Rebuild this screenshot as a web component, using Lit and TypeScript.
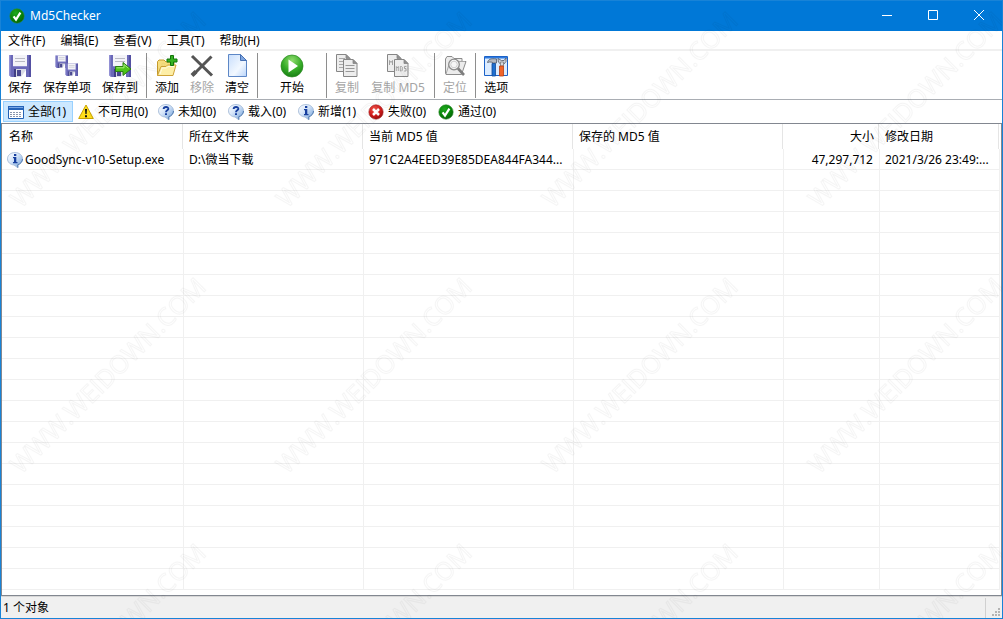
import { LitElement, html, svg, css, nothing } from "lit";
import { customElement, property, state } from "lit/decorators.js";
import { classMap } from "lit/directives/class-map.js";

const check = (id: string) => svg`
  <defs><radialGradient id=${id} cx=".4" cy=".3" r=".75">
    <stop offset="0" stop-color="#1fa81f"/><stop offset=".6" stop-color="#078407"/><stop offset="1" stop-color="#055e05"/>
  </radialGradient></defs>
  <circle cx="8" cy="8" r="7.2" fill="url(#${id})" stroke="#2f8a2f" stroke-width=".6"/>
  <path d="M4.600 8.300 7 11.600 11.400 4.600" fill="none" stroke="#fff" stroke-width="2.200"/>`;

const bubble = (mark: unknown) => svg`
  <defs><linearGradient id="bub" x1="0" y1="0" x2="1" y2="1">
    <stop offset="0" stop-color="#fff"/><stop offset=".4" stop-color="#d8e7fa"/><stop offset="1" stop-color="#6f9fd8"/>
  </linearGradient></defs>
  <path d="M8 .5C12.200.5 15.500 3.200 15.500 6.800c0 2.900-2 5.100-4.700 5.900V15.800L7 13C3.300 12.700.5 10.200.5 6.800.5 3.200 3.800.5 8 .5z" fill="url(#bub)" stroke="#9db5d3" stroke-width=".8"/>
  <path d="M10.800 15.600V12.700C13.500 11.900 15.400 9.800 15.500 7" fill="none" stroke="#4f7ab2" stroke-width="1"/>
  ${mark}`;

const disk = svg`
  <path d="M1 1h21.500v22H3L1 21z" fill="#6a68b8"/>
  <path d="M1 1h1.500v20.500L4 23H3L1 21z" fill="#9290d4"/>
  <path d="M21 1h2v22h-2z" fill="#5350a2"/>
  <path d="M5 1h14v11H5z" fill="#f3f3f8"/>
  <path d="M7 4.500h10M7 7.500h10" stroke="#b9bac4" stroke-width="1"/>
  <path d="M5 12h14v1H5z" fill="#8a88cc"/>
  <path d="M6 15h12v8H6z" fill="#3f3d83"/>
  <path d="M8 15h10v8H8z" fill="#d9dbe6"/>
  <path d="M9 16h4v6H9z" fill="#4a4890"/>
  <path d="M13 23 18 16v7z" fill="#fff"/>`;

const sheet = (x: number, y: number) => svg`
  <g transform="translate(${x} ${y})">
    <path d="M.5.5h9.500l4 4v13H.5z" fill="#ededed" stroke="#868686"/>
    <path d="M10 .5v4h4z" fill="#8f8f8f" stroke="#868686" stroke-width=".8"/>
  </g>`;

const ICONS: Record<string, { box: string; art: unknown }> = {
  save: { box: "0 0 24 24", art: disk },
  saveItem: {
    box: "0 0 24 24",
    art: svg`<g transform="translate(0 1) scale(.56)">${disk}</g><g transform="translate(10 9) scale(.56)">${disk}</g>`,
  },
  saveTo: {
    box: "0 0 24 24",
    art: svg`${disk}<path d="M7.500 12.500h7.500V8.500l8 6.500-8 6.500v-4H7.500z" fill="#4cc417" stroke="#2a7d12" stroke-width="1"/><path d="M8.500 13.800h7.500V10.600l4.500 3.600" fill="none" stroke="#a5ec7a"/>`,
  },
  add: {
    box: "0 0 24 24",
    art: svg`<path d="M2.500 21.500v-14l1.500-1.500h5l2 2h8v4" fill="#f6dd7d" stroke="#c59a2c"/>
      <path d="M2.500 21.500 6 12.500h5l1.500-1.500h8.500L18 21.500z" fill="#fdeea6" stroke="#cfa337"/>
      <path d="M5 20l2.200-6h4.300l1.500-1.500h6" fill="none" stroke="#fffbe0"/>
      <path d="M15.500 1.500h3v3.500h3.500v3h-3.500v3.500h-3V8H12V5h3.500z" fill="#35b322" stroke="#11770a"/>`,
  },
  remove: {
    box: "0 0 24 24",
    art: svg`<path d="M2 2 22 21.500M21.500 2.500 3.500 20.500" stroke="#555" stroke-width="3"/><path d="M2 21.500 6 17.500" stroke="#555" stroke-width="4"/>`,
  },
  clear: {
    box: "0 0 24 24",
    art: svg`<defs><linearGradient id="pg" x1="0" y1="0" x2="1" y2="1"><stop offset="0" stop-color="#c8defc"/><stop offset=".6" stop-color="#f2f8ff"/><stop offset="1" stop-color="#b9d4fa"/></linearGradient></defs>
      <path d="M3.500.5h12l6 6v16h-18z" fill="url(#pg)" stroke="#5d87c6"/>
      <path d="M15.500.5v6h6z" fill="#7fa6e0" stroke="#4771b4"/>`,
  },
  start: {
    box: "0 0 24 24",
    art: svg`<defs><radialGradient id="go" cx=".5" cy=".25" r=".8"><stop offset="0" stop-color="#8fdc6e"/><stop offset=".55" stop-color="#35ab27"/><stop offset="1" stop-color="#147a12"/></radialGradient></defs>
      <circle cx="12" cy="12" r="11" fill="url(#go)" stroke="#2a8a20" stroke-width=".7"/>
      <path d="M8.500 5.500 18 12l-9.500 6.500z" fill="#fff"/>`,
  },
  copy: {
    box: "0 0 24 24",
    art: svg`${sheet(1, 0)}<path d="M4 4.500h6M4 7.500h5M4 10.500h4M4 13.500h4" stroke="#a8a8a8"/>
      ${sheet(8, 5)}<path d="M10.500 11.500h9M10.500 14.500h9M10.500 17.500h9" stroke="#999"/>`,
  },
  copyMd5: {
    box: "0 0 24 24",
    art: svg`${sheet(1, 0)}<path d="M3.500 11V6.500l1.500 2 1.500-2V11" fill="none" stroke="#a0a0a0"/>
      ${sheet(8, 5)}<path d="M10.300 17v-4.500l1 1.500 1-1.500V17M14.300 12.500v4.500h1.200l.8-.8v-3l-.8-.7zM20.500 12.500h-2v2H20v2.500h-2" fill="none" stroke="#959595" stroke-width=".8"/>`,
  },
  locate: {
    box: "0 0 24 24",
    art: svg`<path d="M2.500 19V5l1.500-2.500h5L11 4.500h8v3h4L18.500 20.500H3z" fill="#ececec" stroke="#8c8c8c"/>
      <path d="M3 20 7 7.500h15" fill="none" stroke="#a8a8a8"/>
      <circle cx="11" cy="10.500" r="5.300" fill="#f6f6f6" stroke="#8c8c8c" stroke-width="1.300"/>
      <circle cx="11" cy="10.500" r="3.300" fill="none" stroke="#ccc"/>
      <path d="M15 14.500 21 21" stroke="#7e7e7e" stroke-width="2.600"/>`,
  },
  options: {
    box: "0 0 24 24",
    art: svg`<path d="M.5 2.500h23v19H.5z" fill="#dcecff" stroke="#1c62c8"/>
      <path d="M1 3h22v1.500H1z" fill="#2f7be0"/>
      <path d="M3.500 8.500C4 5.500 7 4 12.500 5v4H9.500L8 8.200 5.500 8z" fill="#b4b9c2" stroke="#565b66" stroke-width=".8"/>
      <path d="M8 9.500h3.500V22H8z" fill="#1f6fd0" stroke="#124a96" stroke-width=".8"/>
      <path d="M14 4.500 14.300 8 16.500 10h3.500L22 7.500V4l-2 2.500h-2.500z" fill="#ccd0d8" stroke="#565b66" stroke-width=".8"/>
      <path d="M16.500 8h3v4h-3z" fill="#d5d8de" stroke="#666" stroke-width=".6"/>
      <path d="M15.500 12h4v10h-4z" fill="#f0642a" stroke="#b53d12" stroke-width=".8"/>`,
  },
  all: {
    box: "0 0 16 16",
    art: svg`<path d="M.5 2.500h15v12H.5z" fill="#fff" stroke="#2462b4"/><path d="M0 2h16v4H0z" fill="#2563b8"/><path d="M1 3h14v1H1z" fill="#78a7e6"/>
      <path d="M2 8.500h12M2 10.500h12M2 12.500h12" stroke="#8a96ac" stroke-dasharray="2 1"/>`,
  },
  warn: {
    box: "0 0 16 16",
    art: svg`<path d="M8 1 15.300 14.500H.7z" fill="#ffdf1b" stroke="#c9a300" stroke-linejoin="round"/><path d="M7 5h2l-.4 5H7.400z" fill="#111"/><path d="M7 11.200h2v2H7z" fill="#111"/>`,
  },
  question: {
    box: "0 0 16 16",
    art: bubble(svg`<path d="M5.600 5C5.800 2.400 10.400 2.200 10.300 4.900 10.200 6.300 8 6.200 8 8.200" fill="none" stroke="#173f9e" stroke-width="1.900"/><path d="M7 9.200h2v1.900H7z" fill="#173f9e"/>`),
  },
  info: {
    box: "0 0 16 16",
    art: bubble(svg`<path d="M7 2h2.300v2H7zM6 5h3.300v5H10.500v1.200H6v-1.200H7V6.200H6z" fill="#173f9e"/>`),
  },
  fail: {
    box: "0 0 16 16",
    art: svg`<defs><radialGradient id="rd" cx=".4" cy=".3" r=".75"><stop offset="0" stop-color="#f0564a"/><stop offset=".6" stop-color="#cf1a1a"/><stop offset="1" stop-color="#8e0c0c"/></radialGradient></defs>
      <circle cx="8" cy="8" r="7.200" fill="url(#rd)" stroke="#a52b2b" stroke-width=".6"/><path d="M5 5l6 6M11 5l-6 6" stroke="#fff" stroke-width="2.500"/>`,
  },
  pass: { box: "0 0 16 16", art: check("gr") },
};

@customElement("app-icon")
export class AppIcon extends LitElement {
  @property() name = "save";
  static styles = css`
    :host { display: block; width: 16px; height: 16px; flex: none; }
    .art { display: block; width: 100%; height: 100%; }
  `;
  render() {
    const icon = ICONS[this.name];
    return html`<svg class="art" viewBox=${icon.box} aria-hidden="true">${icon.art}</svg>`;
  }
}

interface Tool { label: string; icon: string; off?: boolean; size?: "wide" | "broad" }

const TOOLS: (Tool | null)[] = [
  { label: "保存", icon: "save" },
  { label: "保存单项", icon: "saveItem" },
  { label: "保存到", icon: "saveTo" },
  null,
  { label: "添加", icon: "add" },
  { label: "移除", icon: "remove", off: true },
  { label: "清空", icon: "clear" },
  null,
  { label: "开始", icon: "start", size: "wide" },
  null,
  { label: "复制", icon: "copy", off: true },
  { label: "复制 MD5", icon: "copyMd5", off: true, size: "broad" },
  null,
  { label: "定位", icon: "locate", off: true },
  null,
  { label: "选项", icon: "options" },
];

const FILTERS = [
  { label: "全部", count: 1, icon: "all" },
  { label: "不可用", count: 0, icon: "warn" },
  { label: "未知", count: 0, icon: "question" },
  { label: "载入", count: 0, icon: "question" },
  { label: "新增", count: 1, icon: "info" },
  { label: "失败", count: 0, icon: "fail" },
  { label: "通过", count: 0, icon: "pass" },
];

const MENUS = ["文件(F)", "编辑(E)", "查看(V)", "工具(T)", "帮助(H)"];
const COLUMNS = ["名称", "所在文件夹", "当前 MD5 值", "保存的 MD5 值", "大小", "修改日期"];
const EMPTY_ROWS = Array.from({ length: 20 });

@customElement("app-root")
export class AppRoot extends LitElement {
  @state() private active = 0;

  static styles = css`
    :host {
      display: block;
      font: 12px/16px "Noto Sans", "Noto Sans CJK SC", sans-serif;
      color: #000;
    }
    * { box-sizing: border-box; }
    button {
      font: inherit; color: inherit; background: none; border: 0;
      margin: 0; padding: 0; white-space: nowrap;
    }
    .window {
      position: relative; display: flex; flex-direction: column;
      min-height: 100vh; background: #fff;
      border: 1px solid #1883d7; overflow: hidden;
    }
    .title {
      display: flex; align-items: center; height: 30px; flex: none;
      background: #0078d7; color: #fff; padding-left: 8px;
    }
    .name { flex: 1; margin: 0; padding-left: 5px; font: inherit; }
    .control { width: 46px; height: 30px; display: grid; place-items: center; }
    .glyph { display: block; width: 12px; height: 12px; fill: none; stroke: #fff; }
    .menu {
      display: flex; gap: 15px; align-items: center; height: 20px; flex: none;
      padding: 2px 0 0 7px; border-bottom: 2px solid #f0f0f0;
    }
    .tools {
      display: flex; gap: 1px; height: 49px; flex: none;
      padding: 2px 0 1px 2px; border-bottom: 1px solid #a9adb3;
    }
    .tool { padding: 1px 5px 0; display: flex; flex-direction: column; align-items: center; gap: 2px; }
    .tool.wide { min-width: 62px; }
    .tool.broad { min-width: 66px; }
    .tool:disabled { color: #a5a5a5; }
    .big { width: 24px; height: 24px; }
    .rule { width: 1px; margin: 0 2px; background: #8e8e8e; }
    .filters { display: flex; height: 23px; flex: none; padding: 1px 0 1px 2px; }
    .filter {
      display: flex; align-items: center; gap: 4px; min-width: 70px;
      padding: 0 4px; border: 1px solid transparent;
    }
    .filter.on { background: #cce8ff; border-color: #99d1ff; }
    .list { flex: 1; border: 1px solid #828790; padding: 0 1px 2px 0; }
    .grid { width: 100%; table-layout: fixed; border-collapse: separate; border-spacing: 0; }
    .c0 { width: 182px; }
    .c1 { width: 180px; }
    .c2, .c3 { width: 210px; }
    .c4 { width: 96px; }
    th, td { padding: 0 5px; text-align: left; font-weight: normal; white-space: nowrap; overflow: hidden; }
    th { height: 25px; background: linear-gradient(#e5e5e5, #e5e5e5) right 1px top 0 / 1px 100% no-repeat; }
    th.h0 { padding-left: 7px; }
    td { height: 21px; padding-top: 1px; border-right: 1px solid #f0f0f0; border-bottom: 1px solid #f0f0f0; }
    .num { text-align: right; padding-right: 6px; }
    .entry { display: flex; align-items: center; gap: 2px; }
    .status {
      display: flex; align-items: center; height: 22px; flex: none;
      background: #f0f0f0; border-top: 1px solid #d7d7d7; padding-left: 2px;
    }
    .state { flex: 1; }
    .grip { width: 17px; height: 20px; border-left: 1px solid #d0d0d0; fill: #b4b4b4; }
    .mark {
      position: absolute; inset: 0; width: 100%; height: 100%; pointer-events: none;
    }
    .stamp { font-family: "Open Sans", sans-serif; font-size: 25px; fill: none; stroke: #000; stroke-opacity: .04; stroke-width: 1; }
  `;

  render() {
    return html`
      <div class="window">
        <header class="title">
          <app-icon name="pass"></app-icon>
          <h1 class="name">Md5Checker</h1>
          <button class="control" aria-label="最小化"><svg class="glyph" viewBox="0 0 12 12"><path d="M1 5.500h10"/></svg></button>
          <button class="control" aria-label="最大化"><svg class="glyph" viewBox="0 0 12 12"><path d="M1.500.5h9v9h-9z"/></svg></button>
          <button class="control" aria-label="关闭"><svg class="glyph" viewBox="0 0 12 12"><path d="M1 0l10 10M11 0 1 10"/></svg></button>
        </header>
        <nav class="menu">${MENUS.map((m) => html`<button>${m}</button>`)}</nav>
        <div class="tools" role="toolbar">
          ${TOOLS.map((t) =>
            t
              ? html`<button
                  class=${classMap({ tool: true, wide: t.size === "wide", broad: t.size === "broad" })}
                  ?disabled=${!!t.off}
                >
                  <app-icon class="big" name=${t.icon}></app-icon><span>${t.label}</span>
                </button>`
              : html`<span class="rule"></span>`
          )}
        </div>
        <div class="filters">
          ${FILTERS.map(
            (f, i) => html`<button
              class=${classMap({ filter: true, on: i === this.active })}
              aria-pressed=${i === this.active ? "true" : "false"}
              @click=${() => (this.active = i)}
            ><app-icon name=${f.icon}></app-icon><span>${f.label}(${f.count})</span></button>`
          )}
        </div>
        <main class="list">
          <table class="grid">
            <colgroup>${COLUMNS.map((_, i) => html`<col class="c${i}">`)}</colgroup>
            <thead>
              <tr>${COLUMNS.map((c, i) => html`<th class=${i === 4 ? "num" : "h" + i}>${c}</th>`)}</tr>
            </thead>
            <tbody>
              <tr>
                <td><div class="entry"><app-icon name="info"></app-icon><span>GoodSync-v10-Setup.exe</span></div></td>
                <td>D:\\微当下载</td>
                <td>971C2A4EED39E85DEA844FA344...</td>
                <td></td>
                <td class="num">47,297,712</td>
                <td>2021/3/26 23:49:...</td>
              </tr>
              ${EMPTY_ROWS.map(() => html`<tr>${COLUMNS.map(() => html`<td>${nothing}</td>`)}</tr>`)}
            </tbody>
          </table>
        </main>
        <footer class="status">
          <span class="state">1 个对象</span>
          <svg class="grip" viewBox="0 0 16 20" aria-hidden="true">
            <path d="M12 10h2v2h-2zM9 13h2v2H9zM12 13h2v2h-2zM6 16h2v2H6zM9 16h2v2H9zM12 16h2v2h-2z"/>
          </svg>
        </footer>
        <svg class="mark" aria-hidden="true">
          <defs>
            <pattern id="tile" x="0" y="6" width="266" height="266" patternUnits="userSpaceOnUse">
              <text class="stamp" transform="translate(20 202) rotate(-45)">WWW.WEIDOWN.COM</text>
            </pattern>
          </defs>
          <rect width="100%" height="100%" fill="url(#tile)"/>
        </svg>
      </div>
    `;
  }
}
